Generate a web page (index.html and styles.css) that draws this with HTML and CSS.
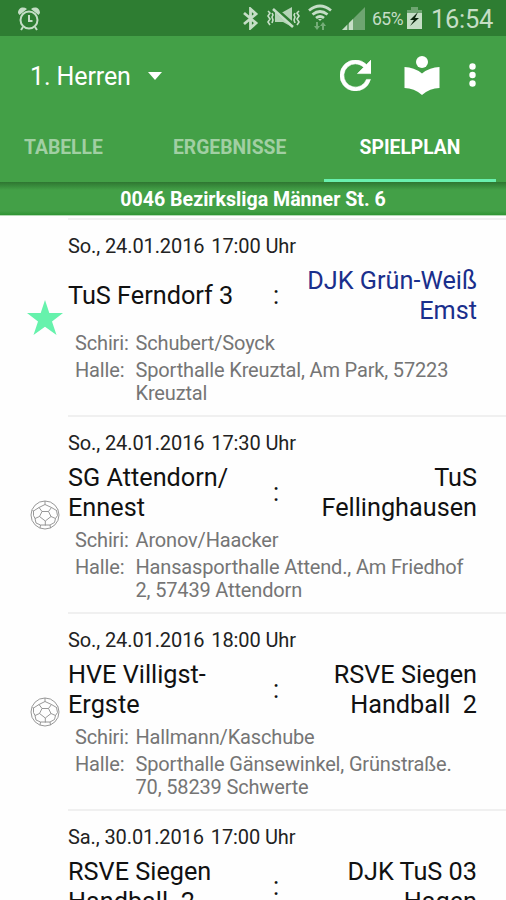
FILE: index.html
```
<!DOCTYPE html>
<html lang="de">
<head>
<meta charset="utf-8">
<title>Spielplan</title>
<link rel="stylesheet" href="styles.css">
</head>
<body>
<svg class="defs" width="0" height="0" aria-hidden="true">
  <symbol id="ball" viewBox="0 0 30 30">
    <g fill="none" stroke="#8c8c8c" stroke-width=".9">
      <circle cx="15" cy="15" r="14"/>
      <path d="M12 11.5h6.500l2.500 5-5.700 4.500-5.800-4.500zM12 11.500L9 7.500M18.500 11.500l3-4M21 16.500l4.500 2M9.500 16.500L5 18.500M15.300 21v4.500M9 7.500l6-3 6.500 3M9 7.500L3.500 11v4.500L5 18.500l1 4.500 4.500 2h9.500l4.500-2.500 1-4 2-3-1-5-5-3M15 4.500V1M3.500 11l-1-1M26.500 10.500l1-1M10.500 25l-.5 3M20 25l.500 3"/>
    </g>
  </symbol>
</svg>
<div class="screen">
  <header class="statusbar">
    <svg class="alarm" width="22" height="24" viewBox="0 0 22 24"><g fill="none" stroke="#c5dec6" stroke-width="2"><circle cx="11" cy="13" r="8.500"/><path d="M11 8v6h3.500M5 20l-2 3M17 20l2 3"/></g><path fill="#c5dec6" d="M0 6C0 1 5-1 9 2L1.500 8zM22 6c0-5-5-7-9-4l7.500 6z"/></svg>
    <svg class="bluetooth" width="17" height="23" viewBox="0 0 17 23"><path fill="none" stroke="#c5dec6" stroke-width="2.800" d="M2 6l12 10-5.500 5V2L14 7 2 17"/></svg>
    <svg class="mute" width="33" height="22" viewBox="0 0 33 22"><g fill="none" stroke="#c5dec6" stroke-width="1.600"><path d="M1 4l2 2-2 3 2 3-2 3 2 3M5 6l1 2-1 2 1 3-1 3M32 4l-2 2 2 3-2 3 2 3-2 3M28 6l-1 2 1 2-1 3 1 3"/></g><path fill="#b4d4b6" d="M8 5h8l9-5v20l-9-5H8z"/><path stroke="#2e7d32" stroke-width="5" d="M8 2l19 17"/><path stroke="#c5dec6" stroke-width="2.600" d="M6 2l20 18"/></svg>
    <svg class="wifi" width="24" height="26" viewBox="0 0 24 26"><g fill="none" stroke="#c5dec6" stroke-width="2.800"><path d="M1 6.500q11-9 22 0M4.500 10.500q7.500-6 15 0M8 14q4-3 8 0"/></g><path fill="#c5dec6" d="M10 15h4l-2 2z"/><path fill="#75ad78" d="M8 18h2v4h2l-3 4-3-4h2zM14 26v-4h-2l3-4 3 4h-2v4z"/></svg>
    <svg class="signal" width="23" height="23" viewBox="0 0 23 23"><path fill="#6ea571" d="M23 0v23H0z"/><path fill="#c5dec6" d="M11 12v11H7v-7zM5 18v5H0z"/></svg>
    <span class="percent">65%</span>
    <svg class="battery" width="15" height="22" viewBox="0 0 15 22"><path fill="#6ea571" d="M4 0h7v3h4v4H0V3h4z"/><path fill="#c5dec6" d="M0 6h15v16H0z"/><path fill="#0c260e" d="M11 5L3 13h4l-4 6 9-8H8z"/></svg>
    <span class="clock">16:54</span>
  </header>
  <div class="toolbar">
    <span class="title">1. Herren</span>
    <svg class="caret" width="14" height="8" viewBox="0 0 14 8"><path fill="#fff" d="M0 0h14L7 8z"/></svg>
    <svg class="refresh" width="31" height="31" viewBox="4 4 16 16"><path fill="#fff" stroke="#fff" stroke-width=".3" d="M17.650 6.350A7.958 7.958 0 0 0 12 4a8 8 0 1 0 7.730 10h-2.080A6 6 0 1 1 12 6c1.660 0 3.140.690 4.220 1.780L13 11h7V4z"/></svg>
    <svg class="book" width="36" height="39" viewBox="0 0 36 39"><circle cx="18" cy="6" r="6" fill="#fff"/><path fill="#fff" d="M18 17.500Q10 11 .500 11v21Q10 32 18 39q8-7 17.500-7V11Q26 11 18 17.500z"/></svg>
    <svg class="more" width="7" height="24" viewBox="0 0 7 24"><g fill="#fff"><circle cx="3.500" cy="3.500" r="3.200"/><circle cx="3.500" cy="12" r="3.200"/><circle cx="3.500" cy="20.500" r="3.200"/></g></svg>
  </div>
  <nav class="tabs">
    <span class="tab t1">TABELLE</span>
    <span class="tab t2">ERGEBNISSE</span>
    <span class="tab active">SPIELPLAN</span>
  </nav>
  <h1 class="league"><span>0046 Bezirksliga Männer St. 6</span></h1>
  <main>
    <article class="match">
      <svg class="star" width="36" height="35" viewBox="0 0 36 35"><path fill="#66f2ac" d="M18 0l4.300 13H36L25 21.500 29.500 35 18 26.800 6.500 35 11 21.500 0 13h13.700z"/></svg>
      <div class="info">
        <time>So., 24.01.2016 <i></i>17:00 Uhr</time>
        <div class="teams"><span>TuS Ferndorf 3</span><b>:</b><span class="away own">DJK Grün-Weiß<br>Emst</span></div>
        <dl><dt>Schiri:</dt><dd>Schubert/Soyck</dd><dt>Halle:</dt><dd>Sporthalle Kreuztal, Am Park, 57223<br>Kreuztal</dd></dl>
      </div>
    </article>
    <article class="match">
      <svg class="ball" width="30" height="30"><use href="#ball"/></svg>
      <div class="info">
        <time>So., 24.01.2016 <i></i>17:30 Uhr</time>
        <div class="teams"><span>SG Attendorn/<br>Ennest</span><b>:</b><span class="away">TuS<br>Fellinghausen</span></div>
        <dl><dt>Schiri:</dt><dd>Aronov/Haacker</dd><dt>Halle:</dt><dd>Hansasporthalle Attend., Am Friedhof<br>2, 57439 Attendorn</dd></dl>
      </div>
    </article>
    <article class="match">
      <svg class="ball" width="30" height="30"><use href="#ball"/></svg>
      <div class="info">
        <time>So., 24.01.2016 <i></i>18:00 Uhr</time>
        <div class="teams"><span>HVE Villigst-<br>Ergste</span><b>:</b><span class="away">RSVE Siegen<br>Handball&nbsp; 2</span></div>
        <dl><dt>Schiri:</dt><dd>Hallmann/Kaschube</dd><dt>Halle:</dt><dd>Sporthalle Gänsewinkel, Grünstraße.<br>70, 58239 Schwerte</dd></dl>
      </div>
    </article>
    <article class="match">
      <div class="info">
        <time>Sa., 30.01.2016 <i></i>17:00 Uhr</time>
        <div class="teams"><span>RSVE Siegen<br>Handball&nbsp; 2</span><b>:</b><span class="away">DJK TuS 03<br>Hagen</span></div>
      </div>
    </article>
  </main>
</div>
</body>
</html>
```
FILE: styles.css
```
* { box-sizing: border-box; }
body { margin: 0; background: #fefefe; font-family: Roboto, sans-serif; }
.defs { display: block; height: 0; }
svg { flex: none; display: block; }
.screen { width: 506px; height: 900px; overflow: hidden; display: flex; flex-direction: column; }
.statusbar { flex: none; height: 36px; background: #2e7d32; color: #c5dec6; display: flex; align-items: flex-start; padding: 0 0 0 18px; }
.statusbar svg { margin-top: 7px; }
.statusbar .bluetooth { margin-left: 202px; }
.statusbar .mute { margin-left: 8px; }
.statusbar .wifi { margin-left: 8px; margin-top: 4px; }
.statusbar .signal { margin-left: 10px; }
.percent { font-size: 17.500px; line-height: 20px; margin: 9px 0 0 7px; width: 35px; letter-spacing: -.5px; white-space: nowrap; }
.clock { font-size: 25.500px; line-height: 30px; margin: 4px 0 0 9px; letter-spacing: -.3px; white-space: nowrap; }
.toolbar { flex: none; height: 80px; background: #43a047; color: #fff; display: flex; align-items: center; padding-left: 30px; }
.title { font-size: 25px; line-height: 30px; padding-top: 1px; width: 103px; letter-spacing: -.1px; white-space: nowrap; }
.caret { margin-left: 15px; }
.refresh { margin-left: 178px; margin-top: -2px; }
.book { margin-left: 33px; margin-top: -1px; }
.more { margin-left: 29px; margin-top: -2px; }
.tabs { flex: none; height: 66px; background: #43a047; display: flex; font-size: 19.300px; font-weight: 700; line-height: 24px; padding: 20px 10px 0 24px; color: #a1cfa3; white-space: nowrap; }
.t1 { width: 149px; }
.t2 { width: 151px; }
.active { width: 172px; height: 46px; color: #fff; text-align: center; border-bottom: 3px solid #69f0ae; }
.league { flex: none; margin: 0; height: 34px; padding-top: 6px; background: linear-gradient(#2e7631, #43a047 8px, #43a047 29px, #2f9433); border-bottom: 1px solid #b5dab6; color: #fff; font-size: 19.600px; font-weight: 700; line-height: 23px; text-align: center; white-space: nowrap; }
main { flex: none; padding-top: 3px; }
.match { height: 197px; display: flex; }
.star { margin: 81px 0 0 27px; }
.ball { margin: 84px 0 0 30px; }
.info { width: 438px; margin-left: auto; border-top: 2px solid #f0f0f0; padding: 13px 29px 0 0; margin-top: -1px; }
time { display: block; padding-top: 1px; font-size: 20px; line-height: 24px; letter-spacing: -.1px; color: #222; white-space: nowrap; }
time i { display: inline-block; width: 2px; }
.teams { margin-top: 8px; height: 59px; display: grid; grid-template-columns: 193px 30px 1fr; align-items: center; font-size: 25.250px; line-height: 29.500px; color: #111; white-space: nowrap; }
.teams b { font-weight: 400; text-align: center; }
.away { text-align: right; }
.own { color: #1a2f8c; }
dl { margin: 7px 0 0 7px; display: grid; grid-template-columns: 60.500px 1fr; row-gap: 4px; font-size: 20px; line-height: 23px; letter-spacing: -.16px; color: #757575; white-space: nowrap; }
dd { margin: 0; }
```
